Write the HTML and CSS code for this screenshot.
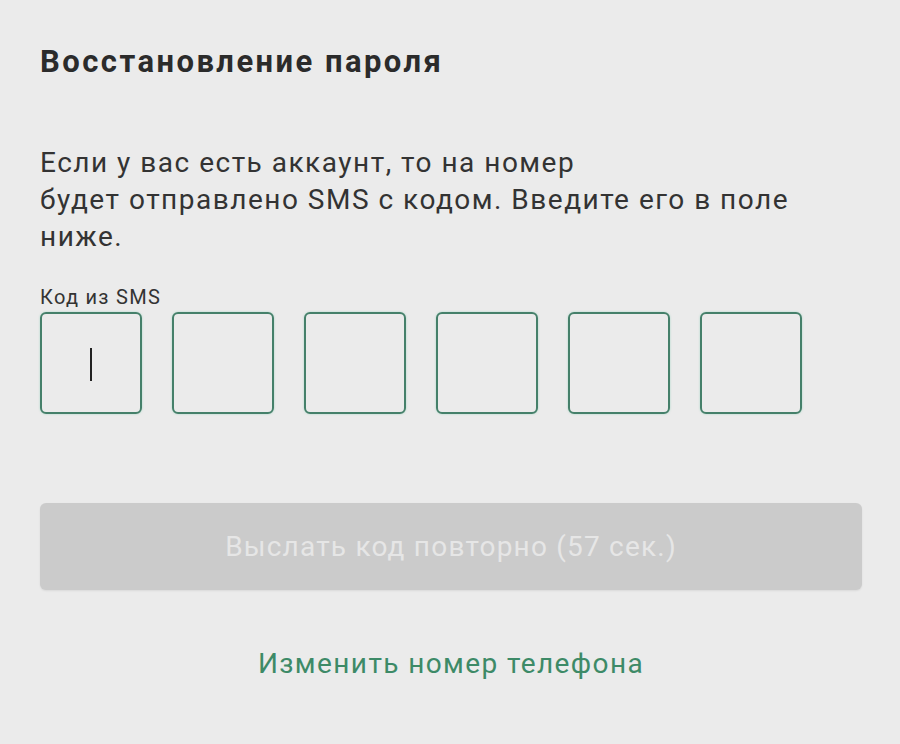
FILE: index.html
```html
<!DOCTYPE html>
<html lang="ru">
<head>
<meta charset="utf-8">
<link rel="stylesheet" href="styles.css">
</head>
<body>
<main class="page">
  <h1 class="title">Восстановление пароля</h1>
  <p class="desc">Если у вас есть аккаунт, то на номер<br>будет отправлено SMS с кодом. Введите его в поле<br>ниже.</p>
  <div class="label">Код из SMS</div>
  <div class="codes">
    <div class="cell active"><span class="caret"></span></div>
    <div class="cell"></div>
    <div class="cell"></div>
    <div class="cell"></div>
    <div class="cell"></div>
    <div class="cell"></div>
  </div>
  <button class="resend" disabled>Выслать код повторно (57 сек.)</button>
  <a class="change" href="#">Изменить номер телефона</a>
</main>
</body>
</html>
```
FILE: styles.css
```css
html, body {
  margin: 0;
  padding: 0;
  background: #ebebeb;
}
body {
  font-family: Roboto, "Liberation Sans", sans-serif;
  color: #2e2e2e;
}
.page {
  display: flex;
  flex-direction: column;
  padding: 42px 38px 0 40px;
}
.title {
  margin: 0;
  font-size: 31px;
  font-weight: 700;
  letter-spacing: 2.45px;
  line-height: 40px;
  color: #2b2b2b;
}
.desc {
  margin: 62px 0 0;
  font-size: 28px;
  letter-spacing: 1.5px;
  line-height: 37px;
  color: #333;
}
.label {
  margin-top: 29px;
  font-size: 20px;
  letter-spacing: 1.3px;
  line-height: 26px;
  color: #333;
}
.codes {
  display: flex;
  gap: 30px;
  margin-top: 2px;
}
.cell {
  box-sizing: border-box;
  width: 102px;
  height: 102px;
  border: 2px solid #45806a;
  border-radius: 6px;
  box-shadow: 0 0 2px rgba(90, 200, 160, 0.5);
  display: flex;
  align-items: center;
  justify-content: center;
}
.caret {
  width: 2px;
  height: 33px;
  background: #222;
  margin-top: 2px;
}
.resend {
  margin-top: 89px;
  height: 87px;
  width: 822px;
  border: none;
  border-radius: 6px;
  background: #cbcbcb;
  color: #e6e6e6;
  font-family: Roboto, "Liberation Sans", sans-serif;
  font-size: 28px;
  letter-spacing: 1.2px;
  box-shadow: 0 1px 2px rgba(0,0,0,0.08);
}
.change {
  margin-top: 56px;
  width: 822px;
  text-align: center;
  font-size: 28px;
  letter-spacing: 1.4px;
  line-height: 36px;
  color: #3d8a67;
  text-decoration: none;
}
```
